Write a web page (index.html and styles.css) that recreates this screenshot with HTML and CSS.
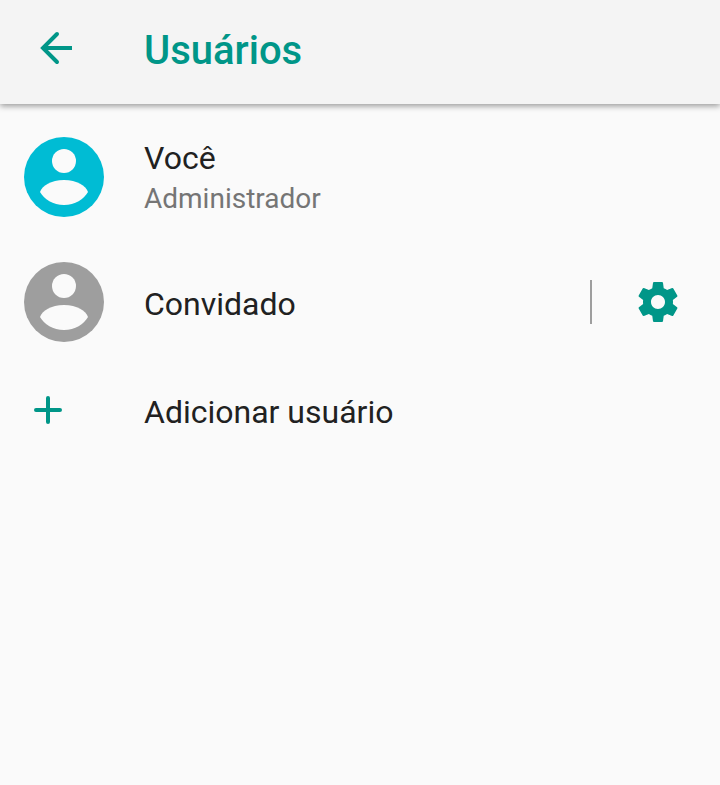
FILE: index.html
```html
<!DOCTYPE html>
<html lang="pt-BR">
  <head>
    <meta charset="UTF-8" />
    <meta name="viewport" content="width=device-width, initial-scale=1.0" />
    <title>Usuários</title>
    <link rel="stylesheet" href="styles.css">
  </head>
  <body>
    <header class="app-bar">
      <button type="button" class="icon-button back-button" aria-label="Voltar">
        <svg class="icon icon-line" viewBox="0 0 48 48" aria-hidden="true">
          <path d="M40 24H11" />
          <path class="icon-line-round" d="M25 10L11 24l14 14" />
        </svg>
      </button>
      <h1 class="app-title">Usuários</h1>
    </header>

    <main>
      <ul class="user-list">
        <li class="user-row user-row-large">
          <button type="button" class="user-button">
            <span class="user-icon">
              <svg class="avatar avatar-owner" viewBox="0 0 80 80" aria-hidden="true">
                <circle cx="40" cy="40" r="40" />
                <circle class="avatar-figure" cx="40" cy="24" r="12" />
                <path class="avatar-figure" d="M16 55c2-6 11-12 24-12s22 6 24 12c-4 7-13 13-24 13s-20-6-24-13z" />
              </svg>
            </span>
            <span class="user-text">
              <span class="user-name">Você</span>
              <span class="user-role">Administrador</span>
            </span>
          </button>
        </li>

        <li class="user-row">
          <button type="button" class="user-button">
            <span class="user-icon">
              <svg class="avatar avatar-guest" viewBox="0 0 80 80" aria-hidden="true">
                <circle cx="40" cy="40" r="40" />
                <circle class="avatar-figure" cx="40" cy="24" r="12" />
                <path class="avatar-figure" d="M16 55c2-6 11-12 24-12s22 6 24 12c-4 7-13 13-24 13s-20-6-24-13z" />
              </svg>
            </span>
            <span class="user-text">
              <span class="user-name">Convidado</span>
            </span>
          </button>
          <span class="divider"></span>
          <button type="button" class="icon-button settings-button" aria-label="Configurações">
            <svg class="icon" viewBox="0 0 24 24" aria-hidden="true">
              <path d="M19.43 12.98c.04-.32.07-.64.07-.98s-.03-.66-.07-.98l2.11-1.65c.19-.15.24-.42.12-.64l-2-3.46c-.12-.22-.39-.3-.61-.22l-2.49 1c-.52-.4-1.08-.73-1.69-.98l-.38-2.65C14.46 2.18 14.25 2 14 2h-4c-.25 0-.46.18-.49.42l-.38 2.65c-.61.25-1.17.59-1.69.98l-2.49-1c-.23-.09-.49 0-.61.22l-2 3.46c-.13.22-.07.49.12.64l2.11 1.65c-.04.32-.07.65-.07.98s.03.66.07.98l-2.11 1.65c-.19.15-.24.42-.12.64l2 3.46c.12.22.39.3.61.22l2.49-1c.52.4 1.08.73 1.69.98l.38 2.65c.03.24.24.42.49.42h4c.25 0 .46-.18.49-.42l.38-2.65c.61-.25 1.17-.59 1.69-.98l2.49 1c.23.09.49 0 .61-.22l2-3.46c.12-.22.07-.49-.12-.64l-2.11-1.65zM12 15.5c-1.93 0-3.5-1.57-3.5-3.5s1.57-3.5 3.5-3.5 3.5 1.57 3.5 3.5-1.57 3.5-3.5 3.5z" />
            </svg>
          </button>
        </li>

        <li class="user-row user-row-small">
          <button type="button" class="user-button">
            <span class="user-icon">
              <svg class="icon icon-line" viewBox="0 0 48 48" aria-hidden="true">
                <path class="icon-line-round" d="M24 12v24M12 24h24" />
              </svg>
            </span>
            <span class="user-text">
              <span class="user-name">Adicionar usuário</span>
            </span>
          </button>
        </li>
      </ul>
    </main>
  </body>
</html>
```

FILE: styles.css
```css
* {
  box-sizing: border-box;
}

body {
  margin: 0;
  min-height: 100vh;
  background: #fafafa;
  color: #212121;
  font-family: Roboto, "Noto Sans", sans-serif;
}

button {
  padding: 0;
  border: 0;
  background: none;
  color: inherit;
  font: inherit;
  text-align: left;
  cursor: pointer;
}

.app-bar {
  display: flex;
  align-items: center;
  height: 104px;
  padding: 0 32px 8px;
  background: #f4f4f4;
  box-shadow: 0 2px 6px rgba(0, 0, 0, 0.4);
}

.icon-button {
  display: flex;
  flex-shrink: 0;
}

.back-button {
  margin-right: 64px;
}

.icon {
  display: block;
  width: 48px;
  height: 48px;
  fill: #009688;
}

.icon-line {
  fill: none;
  stroke: #009688;
  stroke-width: 4;
}

.icon-line-round {
  stroke-linecap: round;
}

.app-title {
  margin: 0;
  padding-top: 6px;
  color: #009688;
  font-size: 40px;
  font-weight: 500;
  line-height: 48px;
}

.user-list {
  margin: 0;
  padding: 8px 0;
  list-style: none;
}

.user-row {
  display: flex;
  align-items: center;
  min-height: 120px;
  padding: 0 38px 0 24px;
}

.user-row-large {
  min-height: 130px;
}

.user-row-small {
  min-height: 96px;
}

.user-button {
  display: flex;
  flex: 1;
  align-items: center;
}

.user-icon {
  flex-shrink: 0;
  width: 120px;
}

.avatar {
  display: block;
  width: 80px;
  height: 80px;
}

.avatar-owner {
  fill: #00bcd4;
}

.avatar-guest {
  fill: #9e9e9e;
}

.avatar-figure {
  fill: #fafafa;
}

.user-text {
  display: flex;
  flex-direction: column;
  padding-top: 4px;
}

.user-name {
  font-size: 32px;
  line-height: 40px;
}

.user-role {
  color: #757575;
  font-size: 28px;
  line-height: 42px;
}

.divider {
  width: 2px;
  height: 44px;
  margin-right: 42px;
  background: #9e9e9e;
}
```
